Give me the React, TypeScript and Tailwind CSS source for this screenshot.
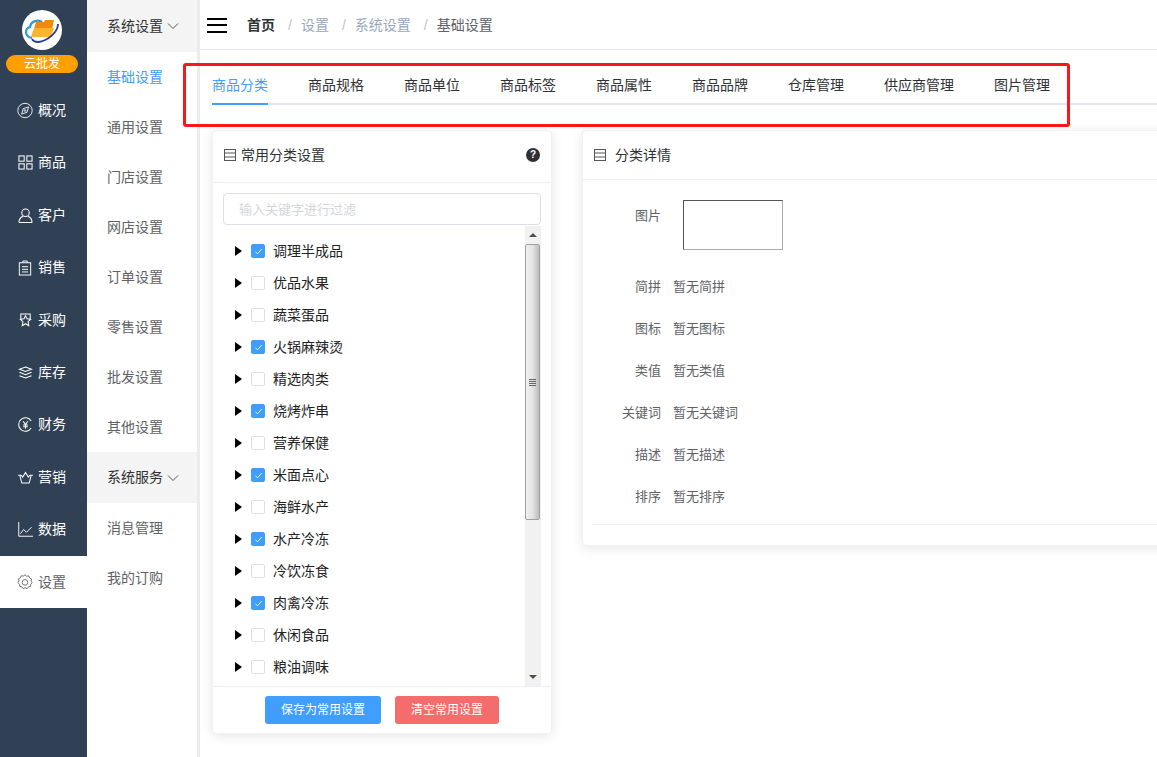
import { useState } from "react";

const font = "font-['Liberation_Sans','Noto_Sans_CJK_SC',sans-serif]";

const IconCompass = () => (
  <svg viewBox="0 0 20 20" className="w-[17px] h-[17px]" fill="none" stroke="currentColor" strokeWidth="1.1">
    <circle cx="10" cy="10" r="9" />
    <path d="M14.5 5.5l-2 6.7-6.7 2.3 2-6.8z" />
    <circle cx="10" cy="10" r="1" />
  </svg>
);
const IconGrid = () => (
  <svg viewBox="0 0 16 16" className="w-[15px] h-[15px]" fill="none" stroke="currentColor" strokeWidth="1.1">
    <rect x="1" y="1" width="5.6" height="5.6" />
    <rect x="9.4" y="1" width="5.6" height="5.6" />
    <rect x="1" y="9.4" width="5.6" height="5.6" />
    <rect x="9.4" y="9.4" width="5.6" height="5.6" />
  </svg>
);
const IconUser = () => (
  <svg viewBox="0 0 16 16" className="w-[15px] h-[15px]" fill="none" stroke="currentColor" strokeWidth="1.1">
    <circle cx="8" cy="5" r="4" />
    <path d="M1 15.5c0-3.5 2.5-6 4.5-6.8M15 15.5c0-3.5-2.5-6-4.5-6.8M1 15.5h14" />
  </svg>
);
const IconClipboard = () => (
  <svg viewBox="0 0 16 18" className="w-[14px] h-[16px]" fill="none" stroke="currentColor" strokeWidth="1.1">
    <rect x="1.5" y="3" width="13" height="14" />
    <path d="M5.5 3V1h5v2M4.5 7.5h7M4.5 10.5h7M4.5 13.5h7" />
  </svg>
);
const IconStar = () => (
  <svg viewBox="0 0 16 16" className="w-[15px] h-[15px]" fill="none" stroke="currentColor" strokeWidth="1.1">
    <path d="M3 7V1h10v6" />
    <path d="M8 2.8l1.6 3.4 3.9.5-2.8 2.6.8 4.2L8 11.4l-3.5 2.1.8-4.2-2.8-2.6 3.9-.5z" />
  </svg>
);
const IconLayers = () => (
  <svg viewBox="0 0 16 14" className="w-[15px] h-[13px]" fill="none" stroke="currentColor" strokeWidth="1.1">
    <path d="M8 1l6.5 2.5L8 6 1.5 3.5z" />
    <path d="M1.5 6.8L8 9.3l6.5-2.5M1.5 10.5L8 13l6.5-2.5" />
  </svg>
);
const IconYen = () => (
  <svg viewBox="0 0 16 16" className="w-[15px] h-[15px]" fill="none" stroke="currentColor" strokeWidth="1.1">
    <path d="M14 4.2A7.2 7.2 0 1 0 14 11.8" />
    <path d="M5.5 4.5L8 8l2.5-3.5M8 8v4.5M5.5 8.5h5M5.5 10.5h5" />
  </svg>
);
const IconCrown = () => (
  <svg viewBox="0 0 16 14" className="w-[15px] h-[13px]" fill="none" stroke="currentColor" strokeWidth="1.1">
    <path d="M0 4.5h3.2L5 6.5 8 1.5l3 5 1.8-2H16" />
    <path d="M2 5l2 8h8l2-8" />
  </svg>
);
const IconChart = () => (
  <svg viewBox="0 0 16 16" className="w-[15px] h-[15px]" fill="none" stroke="currentColor" strokeWidth="1">
    <path d="M.8 0v15.2H16" />
    <path d="M2.5 12.5L6 8l3 3 5.5-5.5" />
  </svg>
);
const IconGear = () => (
  <svg viewBox="0 0 20 20" className="w-[16px] h-[16px]" fill="none" stroke="currentColor" strokeWidth="1.1">
    <path d="M10 1l2 1.8 2.7-.4 1 2.5 2.4 1.3-.6 2.6 1.5 2.2-1.9 1.9-.1 2.7-2.7.4-1.6 2.2-2.5-1-2.5 1-1.6-2.2-2.7-.4-.1-2.7L1 10.8l1.5-2.2-.6-2.6 2.4-1.3 1-2.5 2.7.4z" />
    <circle cx="10" cy="10.5" r="3.5" />
  </svg>
);
const IconList = () => (
  <svg viewBox="0 0 12 12" className="w-[12px] h-[12px]" fill="none" stroke="#555" strokeWidth="1">
    <rect x=".5" y=".5" width="11" height="11" />
    <path d="M1 4h10M1 8h10" />
  </svg>
);
const Chevron = () => (
  <svg viewBox="0 0 12 8" className="w-[12px] h-[8px]" fill="none" stroke="#555" strokeWidth="1">
    <path d="M1 1.5l5 5 5-5" />
  </svg>
);

const Logo = () => (
  <svg viewBox="0 0 40 40" className="w-[40px] h-[40px]">
    <circle cx="20" cy="20" r="20" fill="#fff" />
    <path d="M10 28c-7-1-8-9-2-11 1-6 8-8 12-5" fill="none" stroke="#2a9ad6" strokeWidth="2.2" />
    <path d="M14 12h8l1-2h9l-2 9H12z" fill="#f08a0e" />
    <path d="M12 18h20l-3 9H9z" fill="#f9b52e" />
    <path d="M36 14c0 8-10 17-20 18-3 0-5-1-6-3" fill="none" stroke="#26408f" strokeWidth="1.8" />
  </svg>
);

const navItems = [
  { label: "概况", icon: <IconCompass /> },
  { label: "商品", icon: <IconGrid /> },
  { label: "客户", icon: <IconUser /> },
  { label: "销售", icon: <IconClipboard /> },
  { label: "采购", icon: <IconStar /> },
  { label: "库存", icon: <IconLayers /> },
  { label: "财务", icon: <IconYen /> },
  { label: "营销", icon: <IconCrown /> },
  { label: "数据", icon: <IconChart /> },
  { label: "设置", icon: <IconGear /> },
];

const tabs = ["商品分类", "商品规格", "商品单位", "商品标签", "商品属性", "商品品牌", "仓库管理", "供应商管理", "图片管理"];

const treeItems = [
  { label: "调理半成品", checked: true },
  { label: "优品水果", checked: false },
  { label: "蔬菜蛋品", checked: false },
  { label: "火锅麻辣烫", checked: true },
  { label: "精选肉类", checked: false },
  { label: "烧烤炸串", checked: true },
  { label: "营养保健", checked: false },
  { label: "米面点心", checked: true },
  { label: "海鲜水产", checked: false },
  { label: "水产冷冻", checked: true },
  { label: "冷饮冻食", checked: false },
  { label: "肉禽冷冻", checked: true },
  { label: "休闲食品", checked: false },
  { label: "粮油调味", checked: false },
];

const details = [
  ["简拼", "暂无简拼"],
  ["图标", "暂无图标"],
  ["类值", "暂无类值"],
  ["关键词", "暂无关键词"],
  ["描述", "暂无描述"],
  ["排序", "暂无排序"],
];

const MainNav = () => (
  <div className="w-[87px] shrink-0 bg-[#304156] flex flex-col">
    <div className="h-[84.4px] shrink-0 flex flex-col items-center pt-[10px] pr-[3px]">
      <Logo />
      <div className="mt-[5px] w-[72px] h-[18px] rounded-full bg-[#ff9f00] text-white text-[12px] leading-[18px] text-center">云批发</div>
    </div>
    {navItems.map((item) => {
      const active = item.label === "设置";
      return (
        <div
          key={item.label}
          className={`h-[52.4px] shrink-0 flex items-center pl-[17px] gap-[5px] text-[14px] ${active ? "bg-white text-[#606266]" : "text-white"}`}
        >
          <span className="w-[16px] flex justify-center">{item.icon}</span>
          <span>{item.label}</span>
        </div>
      );
    })}
  </div>
);

const SubNav = () => {
  const link = (label: string, active = false) => (
    <div key={label} className={`h-[50px] shrink-0 flex items-center pl-[20px] text-[14px] ${active ? "text-[#409eff]" : "text-[#606266]"}`}>
      {label}
    </div>
  );
  return (
    <div className="w-[113px] shrink-0 bg-white flex flex-col border-r-[3px] border-[#ececec]">
      <div className="h-[52px] shrink-0 bg-[#f4f4f4] flex items-center pl-[20px] gap-[4px] text-[14px] text-[#303133]">
        <span>系统设置</span>
        <Chevron />
      </div>
      {link("基础设置", true)}
      {["通用设置", "门店设置", "网店设置", "订单设置", "零售设置", "批发设置", "其他设置"].map((l) => link(l))}
      <div className="h-[51px] shrink-0 bg-[#f4f4f4] flex items-center pl-[20px] gap-[4px] text-[14px] text-[#303133]">
        <span>系统服务</span>
        <Chevron />
      </div>
      {["消息管理", "我的订购"].map((l) => link(l))}
    </div>
  );
};

const Scrollbar = () => (
  <div className="w-[16px] shrink-0 bg-[#f1f1f1] flex flex-col">
    <div className="h-[18px] w-full flex items-center justify-center">
      <div className="w-0 h-0 border-x-[4px] border-x-transparent border-b-[4px] border-b-[#505050]" />
    </div>
    <div className="h-[276px] w-[15px] rounded-[2px] border border-[#a0a0a0] bg-gradient-to-r from-[#f0f0f0] via-[#e4e4e4] to-[#bdbdbd] flex items-center justify-center">
      <div className="w-[7px] flex flex-col gap-[1px]">
        <div className="h-px bg-[#666]" />
        <div className="h-px bg-[#666]" />
        <div className="h-px bg-[#666]" />
        <div className="h-px bg-[#666]" />
      </div>
    </div>
    <div className="flex-1" />
    <div className="h-[18px] w-full flex items-center justify-center">
      <div className="w-0 h-0 border-x-[4px] border-x-transparent border-t-[4px] border-t-[#505050]" />
    </div>
  </div>
);

const CategoryCard = () => {
  const [items, setItems] = useState(treeItems);
  return (
    <div className="w-[340px] h-[604px] shrink-0 bg-white rounded-[4px] border border-[#f0f1f4] shadow-[0_2px_12px_0_rgba(0,0,0,0.1)] flex flex-col">
      <div className="h-[52px] shrink-0 border-b border-[#ebeef5] flex items-center pl-[11px] pr-[11px] pb-[3px] text-[14px] text-[#303133]">
        <IconList />
        <span className="ml-[5px] flex-1">常用分类设置</span>
        <span className="w-[14px] h-[14px] rounded-full bg-[#303133] text-white text-[10px] font-bold leading-[14px] text-center">?</span>
      </div>
      <div className="px-[10px] pt-[10px] h-[43px] shrink-0">
        <input
          placeholder="输入关键字进行过滤"
          className="w-full h-[32px] border border-[#dcdfe6] rounded-[4px] px-[15px] text-[13px] outline-none placeholder:text-[#d4d6dc]"
        />
      </div>
      <div className="h-[461px] shrink-0 flex border-b border-[#ebeef5] pr-[10px] overflow-hidden">
        <div className="flex-1 flex flex-col pl-[22px] pt-[9px]">
          {items.map((item, i) => (
            <div key={item.label} className="h-[32px] shrink-0 flex items-center text-[14px] text-[#222]">
              <div className="w-0 h-0 border-y-[5px] border-y-transparent border-l-[7px] border-l-black" />
              <button
                type="button"
                onClick={() => setItems(items.map((it, j) => (j === i ? { ...it, checked: !it.checked } : it)))}
                className={`ml-[9px] w-[14px] h-[14px] rounded-[2px] border flex items-center justify-center ${item.checked ? "bg-[#409eff] border-[#409eff]" : "bg-white border-[#dcdfe6]"}`}
              >
                {item.checked && (
                  <svg viewBox="0 0 10 10" className="w-[9px] h-[9px]" fill="none" stroke="#fff" strokeWidth="1">
                    <path d="M1.5 5.2l2.3 2.3 4.7-5" />
                  </svg>
                )}
              </button>
              <span className="ml-[8px]">{item.label}</span>
            </div>
          ))}
        </div>
        <Scrollbar />
      </div>
      <div className="flex-1 flex justify-center gap-[14px] pt-[9px]">
        <button type="button" className="w-[116px] h-[28px] rounded-[3px] bg-[#409eff] text-white text-[12px]">保存为常用设置</button>
        <button type="button" className="w-[104px] h-[28px] rounded-[3px] bg-[#f56c6c] text-white text-[12px]">清空常用设置</button>
      </div>
    </div>
  );
};

const DetailCard = () => (
  <div className="w-[640px] h-[416px] shrink-0 bg-white rounded-[4px] border border-[#f0f1f4] shadow-[0_2px_12px_0_rgba(0,0,0,0.1)] flex flex-col">
    <div className="h-[49px] shrink-0 border-b border-[#ebeef5] flex items-center pl-[11px] text-[14px] text-[#303133]">
      <IconList />
      <span className="ml-[9px]">分类详情</span>
    </div>
    <div className="flex flex-col pt-[20px] pl-[9px] text-[13px] text-[#606266]">
      <div className="h-[66px] flex items-start">
        <span className="w-[69px] text-right pt-[6px]">图片</span>
        <div className="ml-[22px] w-[100px] h-[50px] border border-t-[#555] border-l-[#555] border-r-[#aaa] border-b-[#aaa]" />
      </div>
      <div className="border-b border-[#ebeef5] pb-[6px]">
        {details.map(([label, value]) => (
          <div key={label} className="h-[42px] flex items-center">
            <span className="w-[69px] text-right">{label}</span>
            <span className="ml-[12px]">{value}</span>
          </div>
        ))}
      </div>
    </div>
  </div>
);

export default function App() {
  return (
    <div className={`${font} relative w-[1157px] h-[757px] overflow-hidden flex bg-white`}>
      <MainNav />
      <SubNav />
      <div className="flex-1 min-w-0 flex flex-col">
        <div className="h-[50px] shrink-0 border-b border-[#e6e8ec] flex items-center pl-[7px] pt-[1px] text-[14px]">
          <div className="w-[20px] flex flex-col gap-[4.5px]">
            <div className="h-[2px] bg-black" />
            <div className="h-[2px] bg-black" />
            <div className="h-[2px] bg-black" />
          </div>
          <span className="ml-[20px] font-bold text-[#303133]">首页</span>
          <span className="ml-[13px] mr-[9px] text-[#c0c4cc]">/</span>
          <span className="text-[#97a8be]">设置</span>
          <span className="ml-[13px] mr-[9px] text-[#c0c4cc]">/</span>
          <span className="text-[#97a8be]">系统设置</span>
          <span className="ml-[13px] mr-[9px] text-[#c0c4cc]">/</span>
          <span className="text-[#606266]">基础设置</span>
        </div>
        <div className="pl-[12px] pt-[15px] h-[80px] shrink-0">
          <div className="h-[40px] flex gap-[40px] border-b-2 border-[#e4e7ed] text-[14px] text-[#303133]">
            {tabs.map((t, i) => (
              <div key={t} className={`h-[40px] leading-[40px] ${i === 0 ? "text-[#409eff] border-b-2 border-[#409eff]" : ""}`}>
                {t}
              </div>
            ))}
          </div>
        </div>
        <div className="flex gap-[30px] pl-[12px]">
          <CategoryCard />
          <DetailCard />
        </div>
      </div>
      <div className="absolute left-[183px] top-[63px] w-[887px] h-[64px] border-[3px] border-[#f5191e] rounded-[3px] pointer-events-none" />
    </div>
  );
}
